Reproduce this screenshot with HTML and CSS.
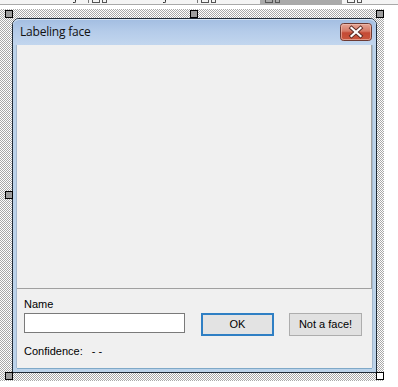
FILE: index.html
```html
<!DOCTYPE html>
<html>
<head>
<meta charset="utf-8">
<link rel="stylesheet" href="styles.css">
</head>
<body>
<div class="toolbar">
  <span class="tb-desc d1"></span>
  <span class="tb-icon i1"><i></i><i></i></span>
  <span class="tb-desc d2"></span>
  <span class="tb-icon i2"><i></i><i></i></span>
  <span class="tb-sel"><span class="tb-icon i3"><i></i><i></i></span></span>
  <span class="tb-icon i4"><i></i><i></i></span>
</div>
<div class="surface">
  <div class="form">
    <div class="titlebar">
      <span class="title">Labeling face</span>
      <span class="close">
        <svg width="32" height="18" viewBox="0 0 32 18">
          <defs>
            <linearGradient id="cg" x1="0" y1="0" x2="0" y2="1">
              <stop offset="0" stop-color="#e6a898"/>
              <stop offset="0.45" stop-color="#d57a66"/>
              <stop offset="0.55" stop-color="#c44a34"/>
              <stop offset="1" stop-color="#c9573e"/>
            </linearGradient>
          </defs>
          <rect x="0.5" y="0.5" width="31" height="17" rx="3" fill="url(#cg)" stroke="#6d3a33"/>
          <rect x="1.5" y="1.5" width="29" height="15" rx="2" fill="none" stroke="#f1c3b6" stroke-opacity="0.6"/>
          <path d="M11.5 5 L20.5 13 M20.5 5 L11.5 13" stroke="#5a2a24" stroke-width="4" stroke-linecap="square"/>
          <path d="M11.5 5 L20.5 13 M20.5 5 L11.5 13" stroke="#ffffff" stroke-width="2.2" stroke-linecap="square"/>
        </svg>
      </span>
    </div>
    <div class="client">
      <div class="picture"></div>
      <div class="controls">
        <div class="label">Name</div>
        <div class="row">
          <div class="textbox"></div>
          <div class="btn btn-ok">OK</div>
          <div class="btn">Not a face!</div>
        </div>
        <div class="label conf">Confidence:<span class="dash">- -</span></div>
      </div>
    </div>
  </div>
  <span class="handle h-tl"></span>
  <span class="handle h-tm"></span>
  <span class="handle h-tr"></span>
  <span class="handle h-lm"></span>
  <span class="handle h-bl"></span>
  <span class="handle h-br"></span>
</div>
</body>
</html>
```

FILE: styles.css
```css
html, body {
  margin: 0;
  padding: 0;
  background: #ffffff;
}
body {
  width: 398px;
  height: 387px;
  overflow: hidden;
  font-family: "Liberation Sans", Arial, sans-serif;
}

/* remnant of the toolbar above */
.toolbar {
  height: 4px;
  background: #f4f4f4;
  border-bottom: 1px solid #a9a9a9;
  display: flex;
  align-items: flex-start;
  position: relative;
}
.tb-desc {
  height: 3px;
  width: 3px;
  border-right: 1px solid #333;
  border-bottom: 1px solid #333;
  border-radius: 0 0 2px 0;
  box-sizing: border-box;
}
.d1 { margin-left: 73px; }
.d2 { margin-left: 56px; }
.tb-icon {
  display: flex;
  gap: 2px;
  height: 3px;
  align-items: flex-end;
}
.tb-icon i {
  display: block;
  height: 3px;
  box-sizing: border-box;
  border: 1px solid #555;
  border-top: none;
}
.tb-icon i:first-child { width: 8px; }
.tb-icon i:last-child { width: 5px; }
.i1 { margin-left: 12px; border-left: 1px solid #777; padding-left: 3px; }
.i2 { margin-left: 31px; border-left: 1px solid #777; padding-left: 3px; }
.tb-sel {
  margin-left: 44px;
  width: 82px;
  height: 4px;
  background: #aaaaaa;
  display: flex;
}
.i3 { margin-left: 5px; }
.i4 { margin-left: 5px; }

/* designer surface */
.surface {
  position: relative;
  margin-top: 4px;
  width: 384px;
  height: 372px;
  padding-top: 9px;
  box-sizing: border-box;
  background: repeating-conic-gradient(#a8a8a8 0 25%, #ffffff 0 50%) 0 0 / 2px 2px;
}

.form {
  margin-left: 12px;
  width: 365px;
  height: 355px;
  box-sizing: border-box;
  border: 1px solid #1f2a36;
  border-radius: 7px 7px 0 0;
  background: #bcd3ea;
  display: flex;
  flex-direction: column;
}

.titlebar {
  height: 26px;
  flex: none;
  display: flex;
  align-items: flex-start;
  justify-content: space-between;
  padding: 0 4px 0 7px;
  border-radius: 6px 6px 0 0;
  background: linear-gradient(#a2bde1 0%, #b4cbe9 45%, #c2d6ee 100%);
  box-shadow: inset 0 1px 0 #d6e4f4;
}
.title {
  font-family: "Open Sans", "Noto Sans", sans-serif;
  font-size: 12px;
  line-height: 16px;
  margin-top: 5px;
  color: #111;
  letter-spacing: -0.2px;
}
.close {
  margin-top: 4px;
  width: 32px;
  height: 18px;
  display: block;
}
.close svg { display: block; }

.client {
  flex: 1;
  margin: 0 4px 4px 4px;
  background: #f0f0f0;
  display: flex;
  flex-direction: column;
  box-shadow: -1px 0 0 #a4b8cf, 1px 0 0 #a4b8cf, 0 1px 0 #7fa9c8;
}

.picture {
  height: 243px;
  flex: none;
  border-bottom: 1px solid #a0a0a0;
  border-right: 1px solid #a0a0a0;
  background: #f0f0f0;
}

.controls {
  padding: 9px 0 0 7px;
  display: flex;
  flex-direction: column;
}
.label {
  font-size: 11px;
  line-height: 13px;
  color: #000;
}
.row {
  display: flex;
  align-items: flex-start;
  margin-top: 2px;
}
.textbox {
  width: 161px;
  height: 20px;
  box-sizing: border-box;
  border: 1px solid #7a7a7a;
  background: #ffffff;
}
.btn {
  width: 73px;
  height: 23px;
  box-sizing: border-box;
  border: 1px solid #adadad;
  background: #e1e1e1;
  font-size: 11px;
  line-height: 21px;
  text-align: center;
  color: #000;
  margin-left: 15px;
}
.btn-ok {
  margin-left: 16px;
  border: 2px solid #2f7fc4;
  line-height: 19px;
  background: #e3e3e3;
}
.conf {
  margin-top: 9px;
}
.dash {
  margin-left: 9px;
}

/* selection handles */
.handle {
  position: absolute;
  width: 8px;
  height: 8px;
  box-sizing: border-box;
  border: 1px solid #000;
  background: #9d9d9d;
}
.h-tl { left: 5px; top: 1px; }
.h-tm { left: 190px; top: 1px; }
.h-tr { left: 376px; top: 1px; }
.h-lm { left: 5px; top: 182px; }
.h-bl { left: 5px; top: 363px; }
.h-br { left: 376px; top: 363px; background: #ffffff; }
```
